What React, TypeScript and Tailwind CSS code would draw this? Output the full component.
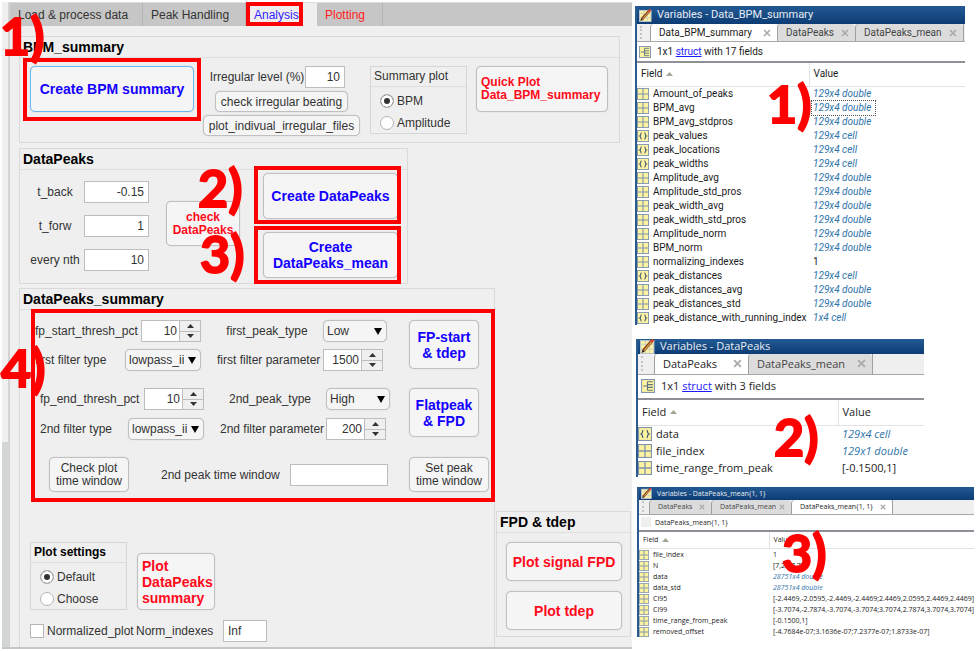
import { useId, type ReactNode } from "react";
import clsx from "clsx";

type Row = { kind: "grid" | "cell"; name: string; value: string; plain?: boolean; focused?: boolean };

const summaryRows: Row[] = [
  { kind: "grid", name: "Amount_of_peaks", value: "129x4 double" },
  { kind: "grid", name: "BPM_avg", value: "129x4 double", focused: true },
  { kind: "grid", name: "BPM_avg_stdpros", value: "129x4 double" },
  { kind: "cell", name: "peak_values", value: "129x4 cell" },
  { kind: "cell", name: "peak_locations", value: "129x4 cell" },
  { kind: "cell", name: "peak_widths", value: "129x4 cell" },
  { kind: "grid", name: "Amplitude_avg", value: "129x4 double" },
  { kind: "grid", name: "Amplitude_std_pros", value: "129x4 double" },
  { kind: "grid", name: "peak_width_avg", value: "129x4 double" },
  { kind: "grid", name: "peak_width_std_pros", value: "129x4 double" },
  { kind: "grid", name: "Amplitude_norm", value: "129x4 double" },
  { kind: "grid", name: "BPM_norm", value: "129x4 double" },
  { kind: "grid", name: "normalizing_indexes", value: "1", plain: true },
  { kind: "cell", name: "peak_distances", value: "129x4 cell" },
  { kind: "grid", name: "peak_distances_avg", value: "129x4 double" },
  { kind: "grid", name: "peak_distances_std", value: "129x4 double" },
  { kind: "cell", name: "peak_distance_with_running_index", value: "1x4 cell" },
];

const peakRows: Row[] = [
  { kind: "cell", name: "data", value: "129x4 cell" },
  { kind: "grid", name: "file_index", value: "129x1 double" },
  { kind: "grid", name: "time_range_from_peak", value: "[-0.1500,1]", plain: true },
];

const meanRows: Row[] = [
  { kind: "grid", name: "file_index", value: "1", plain: true },
  { kind: "grid", name: "N", value: "[7,26,7,7]", plain: true },
  { kind: "grid", name: "data", value: "28751x4 double" },
  { kind: "grid", name: "data_std", value: "28751x4 double" },
  { kind: "grid", name: "CI95", value: "[-2.4469,-2.0595,-2.4469,-2.4469;2.4469,2.0595,2.4469,2.4469]", plain: true },
  { kind: "grid", name: "CI99", value: "[-3.7074,-2.7874,-3.7074,-3.7074;3.7074,2.7874,3.7074,3.7074]", plain: true },
  { kind: "grid", name: "time_range_from_peak", value: "[-0.1500,1]", plain: true },
  { kind: "grid", name: "removed_offset", value: "[-4.7684e-07;3.1636e-07;7.2377e-07;1.8733e-07]", plain: true },
];

/* ---------- analysis window ---------- */

function Panel({ title, className, children }: { title: string; className?: string; children: ReactNode }) {
  return (
    <section className={clsx("border border-[#dadada]", className)}>
      <h2 className="h-[21px] border-b border-[#dedede] pl-[3px] text-sm leading-5 font-bold text-black">{title}</h2>
      {children}
    </section>
  );
}

function Push({ className, focused, children }: { className?: string; focused?: boolean; children: ReactNode }) {
  return (
    <button
      type="button"
      className={clsx(
        "shrink-0 rounded-[5px] border bg-[#f5f5f5] whitespace-nowrap shadow-[0_0_1px_#bbb]",
        focused ? "border-[#6cb8f5]" : "border-[#c0c0c0]",
        className,
      )}
    >
      {children}
    </button>
  );
}

const boxStyle = "h-[22px] border border-[#bdbdbd] bg-white px-1 text-xs text-[#333]";

function Stepper({ label, value }: { label: string; value: string }) {
  const id = useId();
  return (
    <>
      <label htmlFor={id} className="whitespace-nowrap">{label}</label>
      <div className="flex h-[22px] w-[60px] shrink-0 border border-[#bdbdbd]">
        <input id={id} defaultValue={value} className="w-[37px] bg-white pr-0.5 text-right text-xs" />
        <div className="flex flex-1 flex-col border-l border-[#bdbdbd]">
          <button type="button" aria-label="Increase" className="flex flex-1 items-center justify-center border-b border-[#bdbdbd]">
            <svg width="7" height="4" viewBox="0 0 7 4"><path d="M0 4L3.5 0L7 4Z" fill="#333" /></svg>
          </button>
          <button type="button" aria-label="Decrease" className="flex flex-1 items-center justify-center">
            <svg width="7" height="4" viewBox="0 0 7 4"><path d="M0 0L3.5 4L7 0Z" fill="#333" /></svg>
          </button>
        </div>
      </div>
    </>
  );
}

function Choice({ label, value, wide }: { label: string; value: string; wide?: boolean }) {
  const id = useId();
  return (
    <>
      <label htmlFor={id} className="whitespace-nowrap">{label}</label>
      <div className={clsx("relative h-[22px] shrink-0", wide ? "w-[76px]" : "w-[64px]")}>
        <select
          id={id}
          defaultValue={value}
          className="h-full w-full appearance-none rounded-[5px] border border-[#c0c0c0] bg-[#f5f5f5] pr-4 pl-[3px] text-xs text-[#333] shadow-[0_0_1px_#bbb]"
        >
          <option>{value}</option>
        </select>
        <svg width="8" height="7" viewBox="0 0 8 7" className="pointer-events-none absolute top-2 right-[5px]">
          <path d="M0 0H8L4 7Z" fill="#000" />
        </svg>
      </div>
    </>
  );
}

function Radio({ name, label, checked }: { name: string; label: string; checked?: boolean }) {
  return (
    <label className="flex items-center gap-[3px]">
      <input
        type="radio"
        name={name}
        defaultChecked={checked}
        className="size-[14px] appearance-none rounded-full border border-[#b5b5b5] bg-white checked:bg-[#333] checked:shadow-[inset_0_0_0_3px_white]"
      />
      {label}
    </label>
  );
}

function RadioBox({ title, bold, options }: { title: string; bold?: boolean; options: string[] }) {
  return (
    <div role="radiogroup" aria-label={title} className="h-[68px] w-[97px] shrink-0 border border-[#d6d6d6]">
      <div className={clsx("h-5 border-b border-[#dedede] pl-[3px] leading-[19px]", bold && "font-bold text-black")}>{title}</div>
      <div className="flex flex-col gap-1 pt-[5px] pl-[9px] leading-[18px]">
        {options.map((o, i) => (
          <Radio key={o} name={title} label={o} checked={i === 0} />
        ))}
      </div>
    </div>
  );
}

function Numeric({ label, value }: { label: string; value: string }) {
  const id = useId();
  return (
    <>
      <label htmlFor={id} className="text-center whitespace-nowrap">{label}</label>
      <input id={id} defaultValue={value} className={clsx(boxStyle, "w-full text-right")} />
    </>
  );
}

function AnalysisWindow() {
  const tab = "h-[23px] border-r border-[#b3b3b3] text-left";
  return (
    <main className="flex min-w-0 flex-1 flex-col border-b-2 border-[#c6c6c6] bg-[#efefef] text-xs text-[#333]">
      <div className="flex flex-1">
        <div className="flex w-[6px] shrink-0 flex-col">
          <div className="h-[440px]" />
          <div className="flex-1 bg-[#d2d6d4]" />
        </div>
        <div className="flex min-w-0 flex-1 flex-col border-l-2 border-[#d4d4d4]">
          <nav className="flex h-[24px] border-t border-[#dcdcdc] bg-[#c6c6c6]">
            <button type="button" className={clsx(tab, "w-[133px] pl-2")}>Load &amp; process data</button>
            <button type="button" className={clsx(tab, "w-[103px] pl-2")}>Peak Handling</button>
            <button type="button" className="h-6 w-[71px] bg-[#efefef] pl-2 text-left text-[#3322ff]">Analysis</button>
            <button type="button" className={clsx(tab, "w-[66px] pl-2 text-[#ff2020]")}>Plotting</button>
          </nav>

          <Panel title="BPM_summary" className="mt-[10px] mr-3 ml-[9px] h-[107px]">
            <div className="flex items-start pt-2 pl-[10px]">
              <Push focused className="h-[46px] w-[164px] text-sm font-bold text-[#1400ff]">Create BPM summary</Push>
              <div className="ml-[9px] flex w-[157px] flex-col items-center gap-[3px]">
                <div className="grid grid-cols-[96px_40px] items-center self-start pl-[6px]">
                  <Numeric label="Irregular level (%)" value="10" />
                </div>
                <Push className="h-[21px] w-[133px]">check irregular beating</Push>
                <Push className="h-[21px] w-[157px]">plot_indivual_irregular_files</Push>
              </div>
              <div className="ml-[10px]">
                <RadioBox title="Summary plot" options={["BPM", "Amplitude"]} />
              </div>
              <Push className="ml-[9px] h-[46px] w-[132px] pl-1 text-left text-xs leading-[13px] font-bold text-[#ff0a1a]">
                Quick Plot
                <br />
                Data_BPM_summary
              </Push>
            </div>
          </Panel>

          <Panel title="DataPeaks" className="mt-[5px] ml-[9px] h-[136px] w-[389px]">
            <div className="flex items-start pl-[10px]">
              <div className="grid grid-cols-[50px_65px] items-center gap-x-1 gap-y-3 pt-[11px]">
                <Numeric label="t_back" value="-0.15" />
                <Numeric label="t_forw" value="1" />
                <Numeric label="every nth" value="10" />
              </div>
              <Push className="mt-[31px] ml-[17px] h-[45px] w-[74px] text-xs leading-[13px] font-bold text-[#ff0a1a]">
                check
                <br />
                DataPeaks
              </Push>
              <div className="ml-[23px] flex flex-col gap-[13px] pt-[3px] text-sm leading-4 font-bold text-[#1400ff]">
                <Push className="h-[46px] w-[135px]">Create DataPeaks</Push>
                <Push className="h-[46px] w-[135px]">
                  Create
                  <br />
                  DataPeaks_mean
                </Push>
              </div>
            </div>
          </Panel>

          <div className="flex flex-1">
            <Panel title="DataPeaks_summary" className="mt-1 ml-[9px] w-[476px] shrink-0 border-b-0">
              <div className="flex flex-col pt-[10px] pr-[15px]">
                <div className="flex items-start justify-between pl-[15px]">
                  <div className="flex flex-col gap-[7px]">
                    <div className="flex items-center gap-4">
                      <div className="flex w-[166px] items-center justify-between"><Stepper label="fp_start_thresh_pct" value="10" /></div>
                      <div className="grid grid-cols-[100px_66px] items-center gap-[6px] text-center"><Choice label="first_peak_type" value="Low" /></div>
                    </div>
                    <div className="flex items-center gap-4">
                      <div className="flex w-[166px] items-center justify-between"><Choice label="first filter type" value="lowpass_iir" wide /></div>
                      <div className="grid grid-cols-[100px_66px] items-center gap-[6px] text-center"><Stepper label="first filter parameter" value="1500" /></div>
                    </div>
                  </div>
                  <Push className="h-[49px] w-[70px] text-sm leading-4 font-bold text-[#1400ff]">
                    FP-start
                    <br />
                    &amp; tdep
                  </Push>
                </div>

                <div className="mt-[17px] flex items-start justify-between pl-5">
                  <div className="flex flex-col gap-2">
                    <div className="flex items-center gap-4">
                      <div className="flex w-[164px] items-center justify-between"><Stepper label="fp_end_thresh_pct" value="10" /></div>
                      <div className="grid grid-cols-[100px_66px] items-center gap-[6px] text-center"><Choice label="2nd_peak_type" value="High" /></div>
                    </div>
                    <div className="flex items-center gap-4">
                      <div className="flex w-[164px] items-center justify-between"><Choice label="2nd filter type" value="lowpass_iir" wide /></div>
                      <div className="grid grid-cols-[100px_66px] items-center gap-[6px] text-center"><Stepper label="2nd filter parameter" value="200" /></div>
                    </div>
                  </div>
                  <Push className="h-[49px] w-[70px] text-sm leading-4 font-bold text-[#1400ff]">
                    Flatpeak
                    <br />
                    &amp; FPD
                  </Push>
                </div>
              </div>

              <div className="mt-[17px] flex items-center pr-[5px] pl-[29px]">
                <Push className="h-[35px] w-20 leading-[13px]">
                  Check plot
                  <br />
                  time window
                </Push>
                <label htmlFor="window2" className="ml-8 w-[118px] whitespace-nowrap">2nd peak time window</label>
                <input id="window2" className={clsx(boxStyle, "ml-[11px] w-[98px]")} />
                <Push className="ml-auto h-[35px] w-20 leading-[13px]">
                  Set peak
                  <br />
                  time window
                </Push>
              </div>

              <div className="mt-[50px] flex items-end gap-[10px] pl-[10px]">
                <RadioBox title="Plot settings" bold options={["Default", "Choose"]} />
                <Push className="h-[57px] w-[78px] pl-1 text-left text-sm leading-4 font-bold text-[#ff0a1a]">
                  Plot
                  <br />
                  DataPeaks
                  <br />
                  summary
                </Push>
              </div>

              <div className="mt-[10px] flex items-center pl-[10px]">
                <label className="flex w-[106px] items-center gap-[3px] whitespace-nowrap">
                  <input type="checkbox" className="size-[14px] shrink-0 appearance-none border border-[#b5b5b5] bg-white" />
                  Normalized_plot
                </label>
                <label htmlFor="norm" className="w-[87px]">Norm_indexes</label>
                <input id="norm" defaultValue="Inf" className={clsx(boxStyle, "w-11")} />
              </div>
            </Panel>

            <Panel title="FPD &amp; tdep" className="mt-auto mr-px mb-[10px] ml-px h-[126px] flex-1">
              <div className="flex flex-col gap-[10px] pt-[9px] pr-2 pl-[9px] text-sm font-bold text-[#ff0a1a]">
                <Push className="h-[39px]">Plot signal FPD</Push>
                <Push className="h-[39px]">Plot tdep</Push>
              </div>
            </Panel>
          </div>
        </div>
      </div>
    </main>
  );
}

/* ---------- variable browser windows ---------- */

function FieldIcon({ kind, size }: { kind: Row["kind"]; size: number }) {
  return (
    <svg width={size} height={size} viewBox="0 0 13 13" className="block shrink-0">
      <rect x="0.5" y="0.5" width="12" height="12" fill="#fdf3a0" stroke="#8096ac" />
      {kind === "grid" ? (
        <path d="M6.5 1V12M1 6.5H12" stroke="#7d95ad" strokeWidth="1.2" />
      ) : (
        <path
          d="M5 3C3.6 3 4.6 6 3 6.5C4.6 7 3.6 10 5 10M8 3C9.4 3 8.4 6 10 6.5C8.4 7 9.4 10 8 10"
          fill="none"
          stroke="#34506e"
          strokeWidth="1.1"
        />
      )}
    </svg>
  );
}

function EditorIcon({ size }: { size: number }) {
  return (
    <svg width={size} height={size} viewBox="0 0 14 14" className="shrink-0">
      <rect x="0.5" y="1.5" width="12.5" height="12" fill="#fdf3a4" stroke="#b9c4cf" />
      <path d="M0.5 5H13M5 1.5V13M9 1.5V13M0.5 9.5H13" stroke="#c5cdbf" strokeWidth="0.8" />
      <path d="M3 11L11 2" stroke="#8c4a1e" strokeWidth="3" />
      <path d="M4 10.5L11 2.5" stroke="#f0a75a" strokeWidth="1" />
      <path d="M1.5 13L2.2 10L4.2 11.8Z" fill="#222" />
      <path d="M10.5 2.5L12.5 0.5" stroke="#d43c2c" strokeWidth="2.4" />
    </svg>
  );
}

function StructIcon({ size }: { size: number }) {
  return (
    <svg width={size} height={size} viewBox="0 0 13 13" className="shrink-0">
      <rect x="0.5" y="0.5" width="12" height="12" fill="#fdf3a0" stroke="#8096ac" />
      <path d="M2 6.5H6M6 2.5V10.5M6 2.5H11M6 5.2H11M6 7.8H11M6 10.5H11" fill="none" stroke="#5d7388" />
    </svg>
  );
}

type Scale = {
  frame: string;
  bar: string;
  tabs: string;
  info: string;
  head: string;
  rowH: string;
  nameCol: string;
  icon: number;
  close: number;
  grip: string;
};

function VariableWindow({
  title,
  tabs,
  active,
  info,
  rows,
  s,
}: {
  title: string;
  tabs: { label: string; width: string }[];
  active: number;
  info: ReactNode;
  rows: Row[];
  s: Scale;
}) {
  return (
    <section className={clsx("overflow-hidden border-l-2 border-[#2b5a8f] bg-white text-[#1c1c1c]", s.frame)}>
      <header className={clsx("flex items-center gap-[5px] bg-linear-to-b from-[#235a94] to-[#0d3c74] pl-[2px] whitespace-nowrap text-[#e8edf3]", s.bar)}>
        <EditorIcon size={s.icon} />
        {title}
      </header>
      <nav className={clsx("flex border-b border-[#a8a8a8] bg-[#efefef]", s.tabs)}>
        <div className={clsx("flex items-center pl-[3px]", s.grip)}>
          <div className="h-3/4 border-l-2 border-dotted border-[#c4c4c4]" />
        </div>
        {tabs.map((t, i) => (
          <button
            key={t.label}
            type="button"
            className={clsx(
              "flex shrink-0 items-center justify-between rounded-t-sm border-l border-[#a0a0a0] pr-1.5 pl-2 whitespace-nowrap",
              t.width,
              i === active ? "bg-white" : "bg-[#dcdcdc] text-[#444]",
            )}
          >
            {t.label}
            <svg width={s.close} height={s.close} viewBox="0 0 8 8" className="shrink-0">
              <path d="M1 1L7 7M7 1L1 7" stroke="#a9a9a9" strokeWidth="1.6" />
            </svg>
          </button>
        ))}
        <div className="border-l border-[#a0a0a0]" />
      </nav>
      <div className={clsx("flex items-center border-b-2 border-[#8d9096] whitespace-nowrap", s.info)}>{info}</div>
      <table className="w-full table-fixed border-collapse">
        <thead>
          <tr className={s.head}>
            <th className={clsx("border-r border-b border-[#e3e3e3] p-0 pl-1 text-left font-normal", s.nameCol)}>
              <span className="flex items-center gap-1">
                Field
                <svg width="7" height="4" viewBox="0 0 7 4"><path d="M0 4L3.5 0L7 4Z" fill="#a5a698" /></svg>
              </span>
            </th>
            <th className="border-b border-[#e3e3e3] p-0 pl-1 text-left font-normal">Value</th>
          </tr>
        </thead>
        <tbody>
          {rows.map((r) => (
            <tr key={r.name} className={s.rowH}>
              <td className="p-0">
                <span className="flex items-center gap-1 whitespace-nowrap">
                  <FieldIcon kind={r.kind} size={s.icon - 1} />
                  {r.name}
                </span>
              </td>
              <td className="p-0 pl-[3px] whitespace-nowrap">
                <span
                  className={clsx(
                    "inline-block pl-px",
                    !r.plain && "text-[#2f74ab] italic",
                    r.focused && "w-[63px] outline-1 outline-dotted outline-[#555]",
                  )}
                >
                  {r.value}
                </span>
              </td>
            </tr>
          ))}
        </tbody>
      </table>
    </section>
  );
}

const link = "text-[#1a1aff] underline";

/* ---------- red call-outs laid over the windows ---------- */

function Mark({ n, at }: { n: number; at: string }) {
  return (
    <span
      className={clsx(
        "absolute font-['Lato',sans-serif] text-[52px] leading-[54px] font-bold text-[#ff0000] [-webkit-text-stroke:2px_#ff0000]",
        at,
      )}
    >
      {n})
    </span>
  );
}

function Frame({ at }: { at: string }) {
  return <div className={clsx("absolute border-4 border-[#ff0000]", at)} />;
}

export default function App() {
  return (
    <div className="relative flex min-h-screen items-stretch bg-white pt-0.5 pb-0.5 pl-0.5 font-['Liberation_Sans',Arial,sans-serif]">
      <AnalysisWindow />

      <aside className="flex w-[344px] shrink-0 flex-col items-start pt-1">
        <VariableWindow
          title="Variables - Data_BPM_summary"
          active={0}
          tabs={[
            { label: "Data_BPM_summary", width: "w-[127px]" },
            { label: "DataPeaks", width: "w-[78px]" },
            { label: "DataPeaks_mean", width: "w-[108px]" },
          ]}
          info={<><StructIcon size={12} /><span className="ml-1.5">1x1 <a href="#struct" className={link}>struct</a> with 17 fields</span></>}
          rows={summaryRows}
          s={{
            frame: "ml-[3px] w-[330px] font-['Roboto',sans-serif] text-[10px] leading-[14px]",
            bar: "h-[18px] text-[11px]",
            tabs: "h-[18px]",
            info: "h-[21px] pl-[2px]",
            head: "h-[23px]",
            rowH: "h-[14px]",
            nameCol: "w-[172px]",
            icon: 13,
            close: 8,
            grip: "w-[13px]",
          }}
        />
        <VariableWindow
          title="Variables - DataPeaks"
          active={0}
          tabs={[
            { label: "DataPeaks", width: "w-[94px]" },
            { label: "DataPeaks_mean", width: "w-[124px]" },
          ]}
          info={<><StructIcon size={14} /><span className="ml-1.5">1x1 <a href="#struct" className={link}>struct</a> with 3 fields</span></>}
          rows={peakRows}
          s={{
            frame: "mt-[14px] ml-1 w-[288px] font-['Open_Sans','Noto_Sans',sans-serif] text-[11px] leading-4",
            bar: "h-[15px]",
            tabs: "h-[21px]",
            info: "h-[25px] pl-[3px]",
            head: "h-[26px]",
            rowH: "h-[17px]",
            nameCol: "w-[200px]",
            icon: 15,
            close: 9,
            grip: "w-[16px]",
          }}
        />
        <VariableWindow
          title="Variables - DataPeaks_mean{1, 1}"
          active={2}
          tabs={[
            { label: "DataPeaks", width: "w-[62px]" },
            { label: "DataPeaks_mean", width: "w-[80px]" },
            { label: "DataPeaks_mean{1, 1}", width: "w-[101px]" },
          ]}
          info={<><span className="h-[10px] w-[10px] bg-[#efefef]" /><span className="ml-1">DataPeaks_mean{"{1, 1}"}</span></>}
          rows={meanRows}
          s={{
            frame: "mt-[10px] ml-[5px] w-[337px] font-['Open_Sans','Noto_Sans',sans-serif] text-[7px] leading-[11px]",
            bar: "h-[13px]",
            tabs: "h-[15px]",
            info: "h-[17px] pl-[2px]",
            head: "h-[17px]",
            rowH: "h-[11px]",
            nameCol: "w-[130px]",
            icon: 11,
            close: 6,
            grip: "w-[10px]",
          }}
        />
      </aside>

      <div className="pointer-events-none">
        <Frame at="top-0.5 left-[246px] h-6 w-[57px]" />
        <Frame at="top-[58px] left-[23px] h-[63px] w-[178px]" />
        <Frame at="top-[166px] left-[254px] h-[58px] w-[147px]" />
        <Frame at="top-[226px] left-[254px] h-[58px] w-[147px]" />
        <Frame at="top-[309px] left-[31px] h-[193px] w-[464px]" />
        <Mark n={1} at="top-[8px] left-0" />
        <Mark n={2} at="top-[160px] left-[198px]" />
        <Mark n={3} at="top-[226px] left-[200px]" />
        <Mark n={4} at="top-[340px] left-px" />
        <Mark n={1} at="top-[76px] left-[767px]" />
        <Mark n={2} at="top-[409px] left-[774px]" />
        <Mark n={3} at="top-[525px] left-[782px]" />
      </div>
    </div>
  );
}
